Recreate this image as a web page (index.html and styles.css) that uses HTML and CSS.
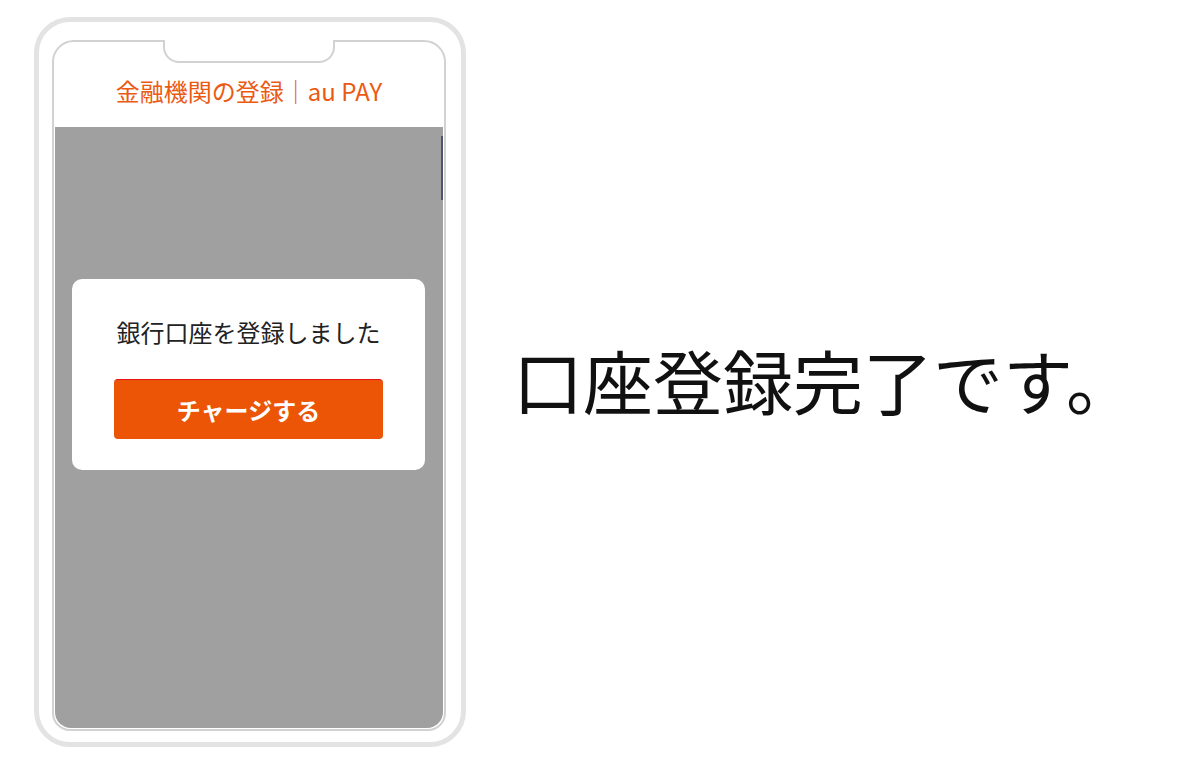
FILE: index.html
```html
<!DOCTYPE html>
<html lang="ja">
<head>
  <meta charset="UTF-8" />
  <title>口座登録完了</title>
  <link rel="stylesheet" href="styles.css">
</head>
<body>
  <div class="stage">
    <!-- スマホ枠 -->
    <div class="phone">
      <div class="screen">
        <div class="notch"></div>
        <div class="app-header">金融機関の登録｜au PAY</div>
        <div class="app-body">
          <div class="scroll-mark"></div>
          <div class="dialog">
            <p class="dialog-text">銀行口座を登録しました</p>
            <button class="charge-btn">チャージする</button>
          </div>
        </div>
      </div>
    </div>

    <!-- 説明 -->
    <p class="caption">口座登録完了です。</p>
  </div>
</body>
</html>
```

FILE: styles.css
```css
body {
  margin: 0;
  background: #fff;
  font-family: "Noto Sans CJK JP", "Noto Sans", sans-serif;
  color: #222;
}

.stage {
  display: flex;
  align-items: center;
  width: 1200px;
  height: 784px;
}

.phone {
  box-sizing: border-box;
  width: 432px;
  height: 730px;
  margin: -20px 0 0 34px;
  padding: 18px 15px 11px 13px;
  border: 5px solid #e3e3e3;
  border-radius: 36px;
  display: flex;
}

.screen {
  position: relative;
  flex: 1;
  display: flex;
  flex-direction: column;
  border: 2px solid #d2d2d2;
  border-radius: 22px 22px 18px 18px;
  background: #fff;
}

.notch {
  position: absolute;
  top: -2px;
  left: 109px;
  width: 168px;
  height: 21px;
  background: #fff;
  border: 2px solid #d2d2d2;
  border-top: none;
  border-radius: 0 0 16px 16px;
}

.app-header {
  height: 85px;
  padding-top: 31px;
  box-sizing: border-box;
  text-align: center;
  font-size: 24px;
  line-height: 1.5;
  color: #eb5a12;
}

.app-body {
  position: relative;
  flex: 1;
  margin: 0 1px 1px 1px;
  padding-top: 152px;
  background: #a0a0a0;
  border-radius: 0 0 16px 16px;
}

.scroll-mark {
  position: absolute;
  top: 9px;
  right: 0;
  width: 2px;
  height: 64px;
  background: #4c5272;
}

.dialog {
  margin: 0 18px 0 17px;
  padding: 30px 42px 31px;
  background: #fff;
  border-radius: 10px;
}

.dialog-text {
  margin: 0 0 24px;
  text-align: center;
  font-size: 24px;
  line-height: 46px;
  color: #222;
}

.charge-btn {
  display: block;
  width: 100%;
  height: 60px;
  border: none;
  border-top: 1px solid #e8121a;
  border-radius: 4px;
  background: #eb5505;
  color: #fff;
  font-family: inherit;
  font-size: 24px;
  font-weight: bold;
}

.caption {
  margin: -24px 0 0 47px;
  font-size: 70px;
  line-height: 1.2;
  color: #111;
}
```
